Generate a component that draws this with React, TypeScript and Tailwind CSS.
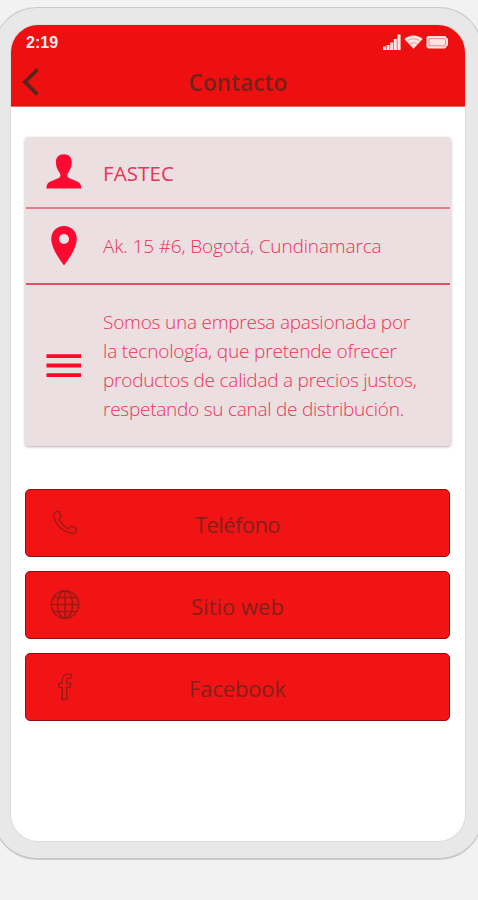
import React from 'react';

function StatusIcons() {
  return (
    <div className="flex items-center gap-[3px] text-[#ffe4e4]">
      <svg width="18" height="16" viewBox="0 0 18 16" fill="currentColor">
        <path d="M0 12.500h3V16H0zM3.600 11h3v5h-3zM7.200 8.500h3V16h-3zM10.800 5h3v11h-3zM14.400 0.500h3.200V16h-3.200z" />
      </svg>
      <svg width="19" height="16" viewBox="0 0 19 16">
        <path d="M9.500 14.800 0.300 5C5.500 0.200 13.500 0.200 18.700 5Z" fill="currentColor" />
        <path d="M3.300 7c3.600-3 8.800-3 12.400 0M6 10c2.100-1.500 4.900-1.500 7 0" fill="none" stroke="#f56a6a" strokeWidth="0.7" />
      </svg>
      <svg width="23" height="16" viewBox="0 0 23 16">
        <rect x="0.500" y="2" width="20" height="12.400" rx="1.800" fill="currentColor" />
        <path d="M20 4.200h2v7.600h-2z" fill="currentColor" />
        <path d="M3 4.600h15.500l1 1.800v3.600l-1 1.800H3z" fill="none" stroke="#f56a6a" strokeWidth="0.8" />
      </svg>
    </div>
  );
}

function PersonIcon() {
  return (
    <svg width="36" height="36" viewBox="0 0 36 36" fill="#fb0b32">
      <path d="M17.800 0.300c5.200 0 8.100 3.300 8 8.200-.1 4.800-2.200 8.300-3.800 10.400-1.200 1.700-.9 4.100.9 5.100l8.300 3.400c2.800 1.200 4 3.200 4.100 7.200H.4c0-4 1.300-6 4.100-7.200l8.300-3.400c1.800-1 2.100-3.400.9-5.100C12 16.700 10 13.300 9.900 8.500c-.1-4.900 2.700-8.200 7.900-8.200Z" />
    </svg>
  );
}

function PinIcon() {
  return (
    <svg width="36" height="40" viewBox="0 0 36 40">
      <path fill="#fb0b32" d="M18 0C10.600 0 5.200 5.500 5.200 12.800 5.200 21 11.200 30.500 18 39.500 24.800 30.500 30.800 21 30.800 12.800 30.800 5.500 25.400 0 18 0Z" />
      <circle cx="18" cy="13" r="5" fill="#f3e2e5" />
    </svg>
  );
}

function MenuIcon() {
  return (
    <svg width="36" height="26" viewBox="0 0 36 26" fill="#f70c24">
      <path d="M.5 1.200h34.500v3.800H.5zM.5 10.600h34.500v3.800H.5zM.5 20.200h34.500v3.800H.5z" />
    </svg>
  );
}

function PhoneIcon() {
  return (
    <svg className="mr-[2px]" width="28" height="28" viewBox="0 0 30 30" fill="none" stroke="#951b16" strokeWidth="1.400" strokeLinejoin="round">
      <path d="M4 4.200 6.300 2.700c.7-.4 1.500-.2 2 .5l2.400 3.600c.5.7.3 1.700-.3 2.200L9 10.300c-.5.500-.6 1.200-.2 1.800 2.400 3.800 5.500 6.600 9.400 8.700.6.300 1.300.2 1.700-.3l1.300-1.400c.5-.6 1.300-.7 2-.3l3.700 2.200c.7.400.9 1.300.4 2l-1 1.500c-.8 1.200-2.200 1.700-3.600 1.500C12.600 24.600 5.400 17.600 2.900 8.400c-.4-1.600-.1-3.200 1.100-4.200Z" />
    </svg>
  );
}

function GlobeIcon() {
  return (
    <svg className="mr-[2px]" width="30" height="30" viewBox="0 0 30 30" fill="none" stroke="#951b16" strokeWidth="1.500">
      <circle cx="15" cy="14.500" r="13.700" />
      <ellipse cx="15" cy="14.500" rx="7.500" ry="13.700" />
      <path d="M15 1v27.400M1.300 14.500h27.400M4 7.500h22M4 21.500h22" />
    </svg>
  );
}

function FacebookIcon() {
  return (
    <svg className="mr-[2px]" width="30" height="30" viewBox="0 0 30 30" fill="none" stroke="#951b16" strokeWidth="1.300">
      <path d="M12.200 27.500V15.300H9v-4.200h3.200V8.200c0-4 2.200-6.100 6-6.100h3v4.100h-2c-1.800 0-2.500.8-2.500 2.400v2.500h4.100l-.6 4.200h-3.500V27.500Z" />
    </svg>
  );
}

function Row({ icon, className, children }: { icon: React.ReactNode; className: string; children: React.ReactNode }) {
  return (
    <div className={`flex items-center pl-[21px] ${className}`}>
      <div className="mr-[21px] flex w-9 shrink-0 justify-center">{icon}</div>
      <div className="whitespace-nowrap">{children}</div>
    </div>
  );
}

function ActionButton({ icon, label, tracking }: { icon: React.ReactNode; label: string; tracking: string }) {
  return (
    <button className="grid h-[68px] w-full grid-cols-[80px_1fr_80px] items-center rounded-[5px] border-[1.500px] border-[#8c1010] bg-[#f21414] text-[22px] text-[#84201a]">
      <span className="flex justify-center">{icon}</span>
      <span className={`pt-[3px] text-center whitespace-nowrap ${tracking}`}>{label}</span>
    </button>
  );
}

export default function App() {
  return (
    <div className="h-[900px] w-[478px] overflow-hidden bg-[#f2f2f2] pt-[7px] font-['Open_Sans','Noto_Sans',sans-serif]">
      <div className="ml-[-7px] h-[853px] w-[490px] rounded-[44px] border border-b-[2px] border-[#c9c9ca] bg-[#e8e8e9] pt-[17px] pl-[17px]">
        <div className="h-[816px] w-[454px] overflow-hidden rounded-[27px] bg-white shadow-[0_0_0_1px_#dddddf]">
          <header className="h-[82px] border-b border-[#e66] bg-[#ee1010]">
            <div className="flex h-[34px] items-center justify-between pr-[16px] pl-[15px]">
              <span className="pt-px font-['Liberation_Sans',sans-serif] text-[16px] font-bold text-[#ffeaea]">2:19</span>
              <StatusIcons />
            </div>
            <div className="grid h-[47px] grid-cols-[40px_1fr_40px] items-center">
              <svg className="mb-[2px] ml-[11px]" width="18" height="28" viewBox="0 0 18 28" fill="none" stroke="#57261d" strokeWidth="3.800">
                <path d="M15.500 1.500 3 14l12.500 12.500" />
              </svg>
              <h1 className="pt-px text-center text-[22.500px] font-semibold tracking-[0.1px] text-[#74231b]">Contacto</h1>
            </div>
          </header>
          <main className="px-[14px] pt-[30px]">
            <section className="h-[309px] rounded-[4px] bg-[#ecdfe1] text-[19px] leading-[29px] font-light text-[#ee3157] shadow-[0_1px_3px_rgba(0,0,0,0.3)]">
              <Row icon={<PersonIcon />} className="h-[70px]">
                <span className="block pt-[2px] text-[20.500px] font-medium tracking-[0.1px]">FASTEC</span>
              </Row>
              <div className="mx-px h-[2px] bg-[#e07f88]" />
              <Row icon={<PinIcon />} className="h-[74px] tracking-[-0.140px]">
                <p className="pt-px">Ak. 15 #6, Bogotá, Cundinamarca</p>
              </Row>
              <div className="mx-px h-[2px] bg-[#da5560]" />
              <Row icon={<MenuIcon />} className="h-[161px] pt-px">
                <p className="tracking-[-0.220px]">Somos una empresa apasionada por</p>
                <p className="tracking-[-0.160px]">la tecnología, que pretende ofrecer</p>
                <p className="tracking-[-0.220px]">productos de calidad a precios justos,</p>
                <p className="tracking-[-0.250px]">respetando su canal de distribución.</p>
              </Row>
            </section>
            <div className="mt-[43px] flex flex-col gap-[14px] pr-px">
              <ActionButton icon={<PhoneIcon />} label="Teléfono" tracking="tracking-[-0.600px]" />
              <ActionButton icon={<GlobeIcon />} label="Sitio web" tracking="" />
              <ActionButton icon={<FacebookIcon />} label="Facebook" tracking="tracking-[-0.150px]" />
            </div>
          </main>
        </div>
      </div>
    </div>
  );
}
